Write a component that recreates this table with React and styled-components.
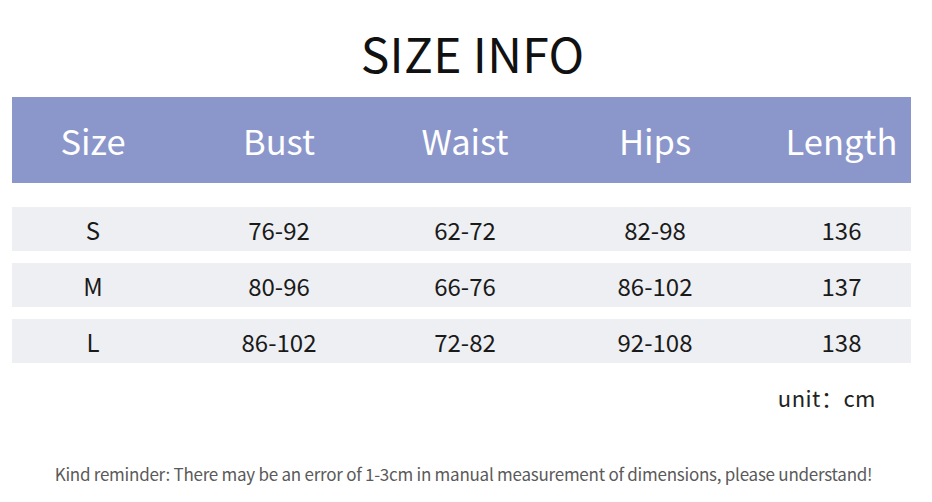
import styled, { createGlobalStyle } from "styled-components";

const GlobalStyle = createGlobalStyle`
  body {
    margin: 0;
    background: #ffffff;
    font-family: "Noto Sans CJK SC", "Noto Sans", sans-serif;
  }
`;

const COLUMNS = "162px 210px 162px 218px 1fr";

const Page = styled.div`
  width: 932px;
  height: 502px;
  overflow: hidden;
  padding: 0 21px 0 12px;
  box-sizing: border-box;
  display: flex;
  flex-direction: column;
`;

const Title = styled.h1`
  margin: 16px 0 0 0;
  height: 81px;
  font-size: 48px;
  font-weight: 400;
  line-height: 72px;
  text-align: center;
  color: #111;
  letter-spacing: 0.3px;
  padding-left: 22px;
`;

const HeadRow = styled.div`
  display: grid;
  grid-template-columns: ${COLUMNS};
  align-items: center;
  height: 86px;
  background: #8b97cb;
  color: #ffffff;
  font-size: 34.5px;
  margin-bottom: 24px;
`;

const Row = styled.div`
  display: grid;
  grid-template-columns: ${COLUMNS};
  align-items: center;
  height: 44px;
  background: #eeeff2;
  color: #1a1a1a;
  font-size: 24px;
  margin-bottom: 12px;
`;

const Cell = styled.div`
  text-align: center;
  line-height: 1;
  padding-left: ${(props) => (props.last ? "8px" : "0")};
  padding-top: ${(props) => (props.head ? "0" : "2px")};
`;

const Unit = styled.div`
  align-self: flex-end;
  margin: 6px 35px 0 0;
  font-size: 22px;
  color: #222;
  letter-spacing: 0.5px;
`;

const Note = styled.p`
  margin: 48px 0 0 0;
  text-align: center;
  font-size: 17px;
  color: #5a5a5a;
  letter-spacing: -0.25px;
  padding-left: 4px;
`;

const headers = ["Size", "Bust", "Waist", "Hips", "Length"];

const rows = [
  ["S", "76-92", "62-72", "82-98", "136"],
  ["M", "80-96", "66-76", "86-102", "137"],
  ["L", "86-102", "72-82", "92-108", "138"],
];

const App = () => {
  return (
    <>
      <GlobalStyle />
      <Page>
        <Title>SIZE INFO</Title>
        <HeadRow>
          {headers.map((h, i) => (
            <Cell key={h} head last={i === headers.length - 1}>
              {h}
            </Cell>
          ))}
        </HeadRow>
        {rows.map((r) => (
          <Row key={r[0]}>
            {r.map((v, i) => (
              <Cell key={i} last={i === r.length - 1}>
                {v}
              </Cell>
            ))}
          </Row>
        ))}
        <Unit>unit：cm</Unit>
        <Note>
          Kind reminder: There may be an error of 1-3cm in manual measurement of
          dimensions, please understand!
        </Note>
      </Page>
    </>
  );
};

export default App;
